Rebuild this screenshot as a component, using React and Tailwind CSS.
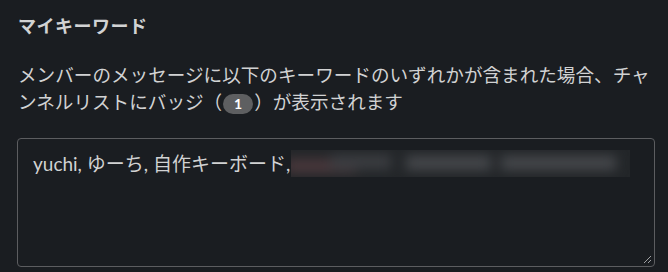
import React from "react";

export default function App() {
  return (
    <div
      className="w-[668px] h-[272px] bg-[#1a1d21] text-[#d1d2d3] overflow-hidden"
      style={{ fontFamily: "Lato, 'Noto Sans CJK JP', sans-serif" }}
    >
      <div className="flex flex-col pl-[18px] pr-[13px] pt-[13px]">
        <div className="text-[18px] font-bold leading-[26px] tracking-[0.5px]">マイキーワード</div>
        <p className="mt-[23px] text-[18.6px] leading-[27px] w-[637px]">
          メンバーのメッセージに以下のキーワードのいずれかが含まれた場合、チャンネルリストにバッジ（
          <span className="inline-flex items-center justify-center w-[30px] h-[20px] mx-[1px] rounded-full bg-[#5e5f61] text-white text-[14px] font-bold align-[0px] leading-none">
            1
          </span>
          ）が表示されます
        </p>
        <div className="relative mt-[22px] w-[638px] h-[129px] -ml-[1px] rounded-[4px] border border-[#5c5d60] pl-[15px] pt-[11px]">
          <div className="flex items-center text-[19px] leading-[26px]">
            <span>yuchi, ゆーち, 自作キーボード,</span>
            <div className="relative ml-[1px] h-[27px] w-[339px] bg-[#232629] overflow-hidden">
              <div className="absolute inset-0 blur-[6px]">
                <div className="absolute left-[-5px] top-[9px] w-[70px] h-[14px] bg-[#4a383c]" />
                <div className="absolute left-[40px] top-[5px] w-[60px] h-[14px] bg-[#3c3e42]" />
                <div className="absolute left-[115px] top-[6px] w-[85px] h-[14px] bg-[#46484c]" />
                <div className="absolute left-[210px] top-[6px] w-[115px] h-[14px] bg-[#46484c]" />
              </div>
            </div>
          </div>
          <svg className="absolute right-[2px] bottom-[2px]" width="9" height="9" viewBox="0 0 9 9">
            <line x1="1" y1="8" x2="8" y2="1" stroke="#a0a1a3" strokeWidth="1" />
            <line x1="5" y1="8" x2="8" y2="5" stroke="#a0a1a3" strokeWidth="1" />
          </svg>
        </div>
      </div>
    </div>
  );
}
